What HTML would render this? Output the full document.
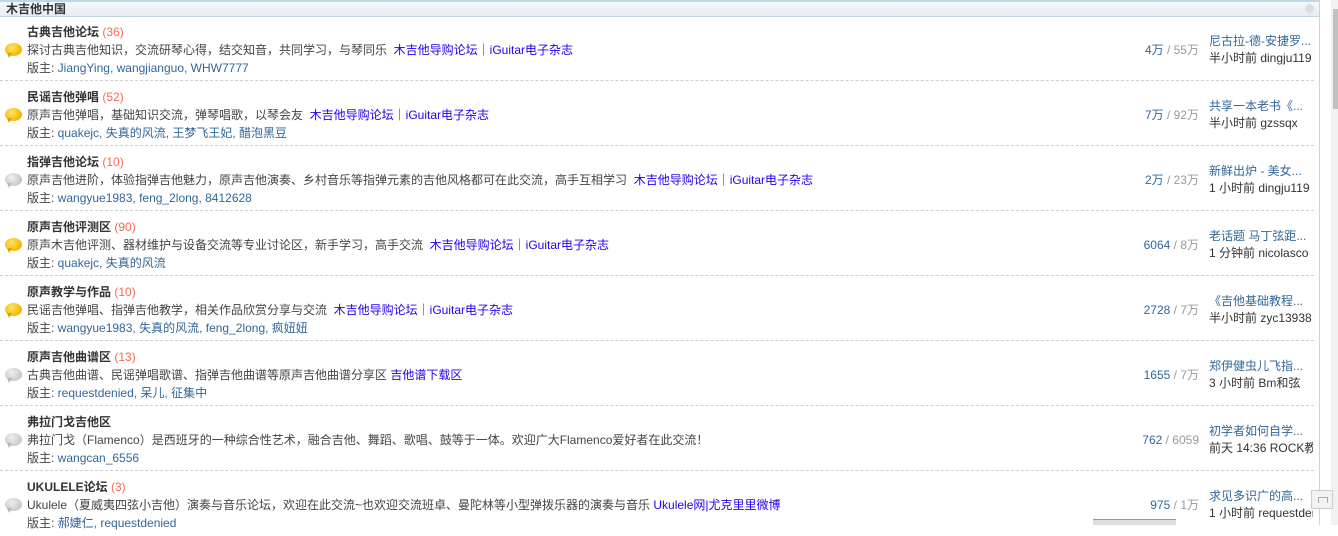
<!DOCTYPE html>
<html><head><meta charset="utf-8">
<style>
*{margin:0;padding:0;box-sizing:border-box}
html,body{width:1338px;height:525px;overflow:hidden;background:#fff;font-family:"Liberation Sans","Noto Sans CJK SC",sans-serif;font-size:12px;color:#444}
#box{position:absolute;left:0;top:0;width:1320px;height:525px;border-right:1px solid #c2d5e3}
#hd{position:absolute;left:0;top:0;width:1319px;height:17px;background:linear-gradient(#f3f8fb,#e5edf2);border-top:2px solid #c2d5e3;border-bottom:1px solid #c2d5e3}
#hd b{position:absolute;left:6px;top:0;line-height:14px;font-size:12px;color:#333}
#hd i{position:absolute;right:5px;top:2px;width:9px;height:9px;border-radius:50%;background:#d8dde0}
.row{position:absolute;left:0;width:1314px;height:65px;border-bottom:1px dashed #cdcdcd}
.t,.d,.m{position:absolute;left:27px;white-space:nowrap;line-height:16px}
.t{top:8px;font-weight:bold;color:#333}
.t span{font-weight:normal;color:#f26c4f}
.d{top:26px}
.m{top:44px;color:#369}
.m em{font-style:normal;color:#444}
a{color:#2200ee;text-decoration:none}
.ic{position:absolute;left:5px;top:27px;width:17px;height:13px;border-radius:50%}
.y{background:radial-gradient(circle at 40% 35%,#ffe566,#f7b500 70%,#d99000)}
.g{background:radial-gradient(circle at 40% 35%,#eee,#c9c9c9 70%,#aaa)}
.y:after,.g:after{content:"";position:absolute;left:2px;top:10px;border-left:2px solid transparent;border-right:3px solid transparent}
.y:after{border-top:5px solid #e2a000}
.g:after{border-top:5px solid #b8b8b8}
.s{position:absolute;right:115px;top:26px;line-height:16px;color:#369;white-space:nowrap}
.s span{color:#999}
.l{position:absolute;left:1209px;top:17px;width:104px;overflow:hidden;white-space:nowrap;line-height:17px}
.l a{color:#369;display:block}
.l div{color:#333}
#sb{position:absolute;left:1331px;top:0;width:7px;height:525px;background:#f1f1f1}
#th{position:absolute;left:1333px;top:9px;width:5px;height:100px;background:#c1c1c1}
#top{position:absolute;left:1311px;top:490px;width:22px;height:19px;background:#f2f2f2;border:1px solid #ccc}
#top:after{content:"";position:absolute;left:6px;top:6px;width:8px;height:5px;border:1px solid #aaa;border-bottom:none}
#bb{position:absolute;left:1093px;top:519px;width:83px;height:6px;background:#ddd;border-top:1px solid #999}
</style></head><body>
<div id="box"></div>
<div id="hd"><b>木吉他中国</b><i></i></div>

<div class="row" style="top:16px"><i class="ic y"></i>
<div class="t">古典吉他论坛 <span>(36)</span></div>
<div class="d">探讨古典吉他知识，交流研琴心得，结交知音，共同学习，与琴同乐&nbsp; <a>木吉他导购论坛｜iGuitar电子杂志</a></div>
<div class="m"><em>版主:</em> JiangYing, wangjianguo, WHW7777</div>
<div class="s">4万 <span>/ 55万</span></div>
<div class="l"><a>尼古拉-德-安捷罗...</a><div>半小时前 dingju119</div></div></div>

<div class="row" style="top:81px"><i class="ic y"></i>
<div class="t">民谣吉他弹唱 <span>(52)</span></div>
<div class="d">原声吉他弹唱，基础知识交流，弹琴唱歌，以琴会友&nbsp; <a>木吉他导购论坛｜iGuitar电子杂志</a></div>
<div class="m"><em>版主:</em> quakejc, 失真的风流, 王梦飞王妃, 醋泡黑豆</div>
<div class="s">7万 <span>/ 92万</span></div>
<div class="l"><a>共享一本老书《...</a><div>半小时前 gzssqx</div></div></div>

<div class="row" style="top:146px"><i class="ic g"></i>
<div class="t">指弹吉他论坛 <span>(10)</span></div>
<div class="d">原声吉他进阶，体验指弹吉他魅力，原声吉他演奏、乡村音乐等指弹元素的吉他风格都可在此交流，高手互相学习&nbsp; <a>木吉他导购论坛｜iGuitar电子杂志</a></div>
<div class="m"><em>版主:</em> wangyue1983, feng_2long, 8412628</div>
<div class="s">2万 <span>/ 23万</span></div>
<div class="l"><a>新鲜出炉 - 美女...</a><div>1 小时前 dingju119</div></div></div>

<div class="row" style="top:211px"><i class="ic y"></i>
<div class="t">原声吉他评测区 <span>(90)</span></div>
<div class="d">原声木吉他评测、器材维护与设备交流等专业讨论区，新手学习，高手交流&nbsp; <a>木吉他导购论坛｜iGuitar电子杂志</a></div>
<div class="m"><em>版主:</em> quakejc, 失真的风流</div>
<div class="s">6064 <span>/ 8万</span></div>
<div class="l"><a>老话题 马丁弦距...</a><div>1 分钟前 nicolasco</div></div></div>

<div class="row" style="top:276px"><i class="ic y"></i>
<div class="t">原声教学与作品 <span>(10)</span></div>
<div class="d">民谣吉他弹唱、指弹吉他教学，相关作品欣赏分享与交流&nbsp; <a>木吉他导购论坛｜iGuitar电子杂志</a></div>
<div class="m"><em>版主:</em> wangyue1983, 失真的风流, feng_2long, 疯妞妞</div>
<div class="s">2728 <span>/ 7万</span></div>
<div class="l"><a>《吉他基础教程...</a><div>半小时前 zyc13938</div></div></div>

<div class="row" style="top:341px"><i class="ic g"></i>
<div class="t">原声吉他曲谱区 <span>(13)</span></div>
<div class="d">古典吉他曲谱、民谣弹唱歌谱、指弹吉他曲谱等原声吉他曲谱分享区 <a>吉他谱下载区</a></div>
<div class="m"><em>版主:</em> requestdenied, 呆儿, 征集中</div>
<div class="s">1655 <span>/ 7万</span></div>
<div class="l"><a>郑伊健虫儿飞指...</a><div>3 小时前 Bm和弦</div></div></div>

<div class="row" style="top:406px"><i class="ic g"></i>
<div class="t">弗拉门戈吉他区</div>
<div class="d">弗拉门戈（Flamenco）是西班牙的一种综合性艺术，融合吉他、舞蹈、歌唱、鼓等于一体。欢迎广大Flamenco爱好者在此交流！</div>
<div class="m"><em>版主:</em> wangcan_6556</div>
<div class="s">762 <span>/ 6059</span></div>
<div class="l"><a>初学者如何自学...</a><div>前天 14:36 ROCK教</div></div></div>

<div class="row" style="top:471px;border:none"><i class="ic g"></i>
<div class="t">UKULELE论坛 <span>(3)</span></div>
<div class="d">Ukulele（夏威夷四弦小吉他）演奏与音乐论坛，欢迎在此交流~也欢迎交流班卓、曼陀林等小型弹拨乐器的演奏与音乐 <a>Ukulele网|尤克里里微博</a></div>
<div class="m"><em>版主:</em> 郝婕仁, requestdenied</div>
<div class="s">975 <span>/ 1万</span></div>
<div class="l"><a>求见多识广的高...</a><div>1 小时前 requestdenied</div></div></div>

<div id="sb"></div><div id="th"></div>
<div id="top"></div>
<div id="bb"></div>
</body></html>
